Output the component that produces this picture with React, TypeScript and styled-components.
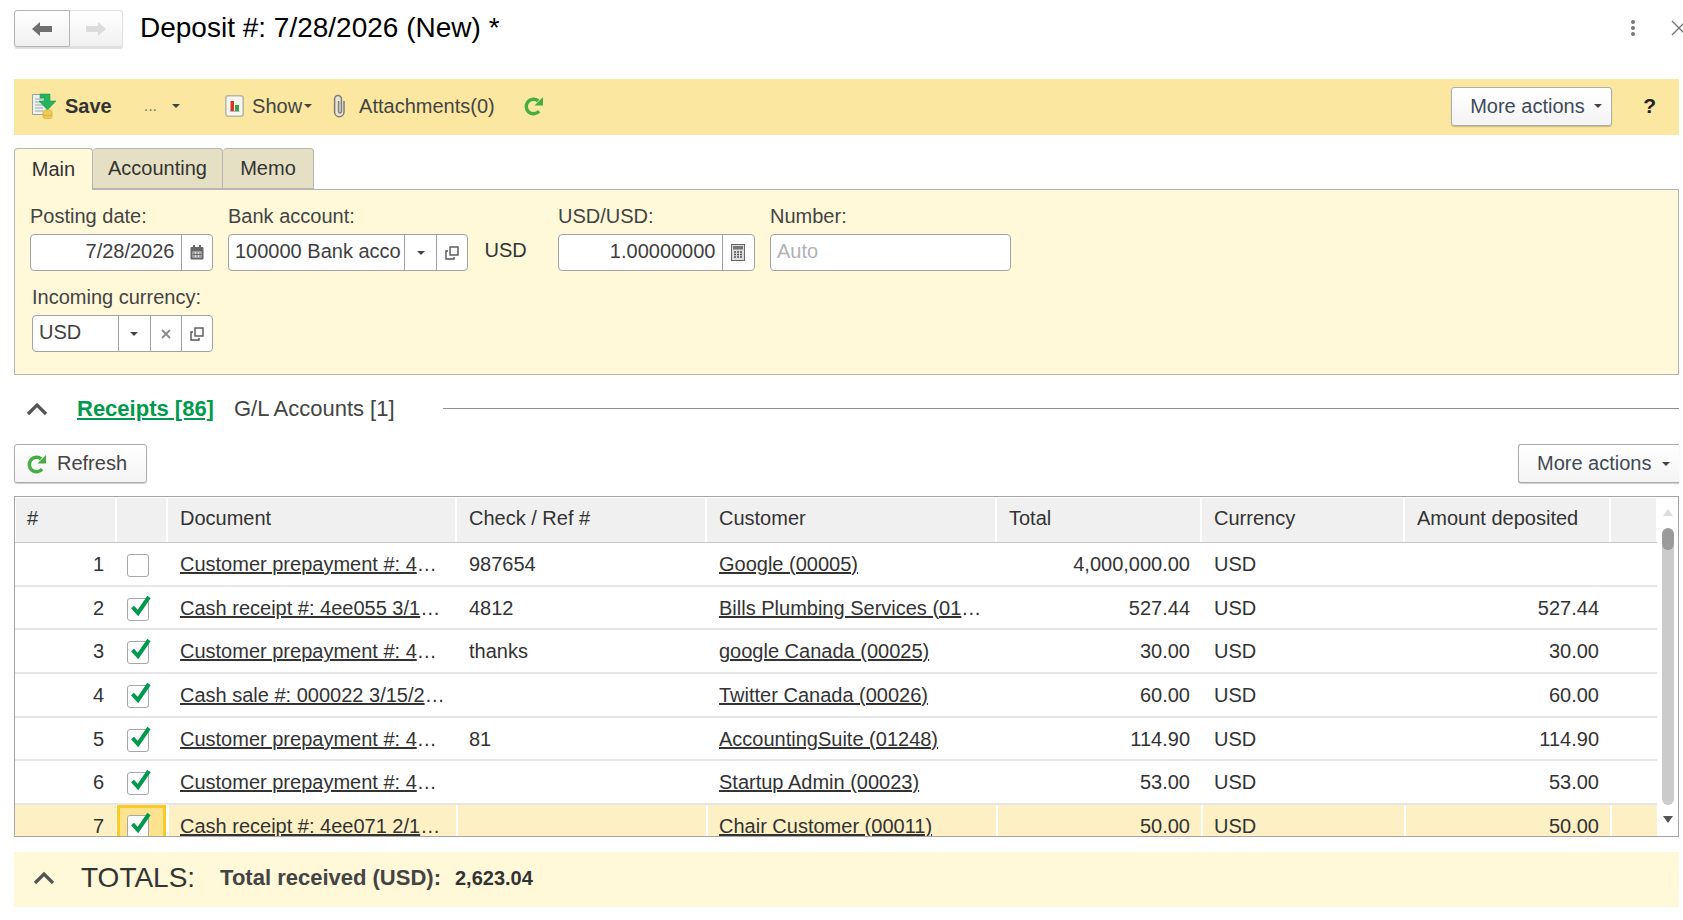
import React from "react";
import styled, { createGlobalStyle } from "styled-components";

const Global = createGlobalStyle`
  html, body { margin: 0; padding: 0; background: #fff; }
  body { font-family: "Liberation Sans", Arial, sans-serif; font-size: 20px; color: #333; overflow: hidden; }
  * { box-sizing: border-box; }
`;

const Page = styled.div`
  width: 1683px; height: 920px; overflow: hidden; padding-left: 14px; padding-right: 4px;
`;
const Header = styled.header`
  height: 79px; display: flex; align-items: flex-start; padding-top: 10px; position: relative;
`;
const NavGroup = styled.div`
  display: flex; width: 109px; height: 37px; border-radius: 3px; flex: none;
  box-shadow: 0 2px 1px rgba(0,0,0,.13);
`;
const NavButton = styled.button<{ $active?: boolean }>`
  flex: ${p => (p.$active ? "0 0 56px" : "1")};
  display: flex; align-items: center; justify-content: center; padding: 0;
  background: linear-gradient(#fff, #f0f0f0);
  border: 1px solid ${p => (p.$active ? "#b4b4b4" : "#dedede")};
  border-left-width: ${p => (p.$active ? "1px" : "0")};
  border-radius: ${p => (p.$active ? "3px 0 0 3px" : "0 3px 3px 0")};
`;
const Title = styled.h1`
  margin: 1px 0 0 17px; font-weight: 400; font-size: 28px; line-height: 34px; color: #000;
`;
const HeaderTools = styled.div`
  position: absolute; top: 19px; right: -8px; display: flex; gap: 35px; align-items: center; width: 57px;
`;

const Toolbar = styled.div`
  height: 56px; background: #fbe79f; display: flex; align-items: center; position: relative; padding-bottom: 2px;
`;
const ToolItem = styled.span<{ $ml?: number; $bold?: boolean; $faint?: boolean }>`
  display: inline-flex; align-items: center; margin-left: ${p => p.$ml ?? 0}px;
  font-weight: ${p => (p.$bold ? 700 : 400)}; color: ${p => (p.$faint ? "#777" : p.$bold ? "#333" : "#444")};
  font-size: ${p => (p.$faint ? 16 : 20)}px;
  white-space: nowrap;
`;
const ActionButton = styled.button<{ $width: number; $clipRight?: boolean }>`
  width: ${p => p.$width}px; height: 39px; padding: 0 9px 0 18px; display: flex; align-items: center; justify-content: space-between;
  font: inherit; color: #3f4a58; background: linear-gradient(#fff, #f4f4f4);
  border: 1px solid #adadad; border-radius: ${p => (p.$clipRight ? "3px 0 0 3px" : "3px")};
  border-right-width: ${p => (p.$clipRight ? 0 : 1)}px;
  box-shadow: 0 1px 1px rgba(0,0,0,.2);
`;
const ToolbarEnd = styled.div`
  margin-left: auto; display: flex; align-items: center;
`;
const Help = styled.span`
  font-weight: 700; font-size: 21px; color: #222; margin: 0 23px 0 31px;
`;

const Tabs = styled.div`
  display: flex; margin-top: 13px; height: 41px; position: relative; z-index: 1;
`;
const Tab = styled.div<{ $active?: boolean; $width: number }>`
  width: ${p => p.$width}px; height: ${p => (p.$active ? 42 : 41)}px;
  display: flex; align-items: center; justify-content: center; padding-top: 0;
  background: ${p => (p.$active ? "#fff8d9" : "#e5e0c4")};
  border: 1px solid #b5b5b5; border-bottom: ${p => (p.$active ? "none" : "1px solid #b5b5b5")};
  border-left-width: ${p => (p.$active ? "1px" : "0")};
  border-radius: 4px 4px 0 0; color: #333;
`;
const Panel = styled.section`
  height: 186px; background: #fff8d9; border: 1px solid #b5b5b5; padding: 14px 0 0 15px;
  display: flex; flex-direction: column; gap: 14px;
`;
const FieldRow = styled.div<{ $indent?: number }>`
  display: flex; gap: 15.5px; margin-left: ${p => p.$indent ?? 0}px;
`;
const Field = styled.div<{ $width: number }>`
  width: ${p => p.$width}px; display: flex; flex-direction: column; gap: 6px;
`;
const Label = styled.label`
  height: 24px; line-height: 24px; color: #444; white-space: nowrap;
`;
const InputBox = styled.div`
  height: 37px; display: flex; background: #fff; border: 1px solid #a3a3a3; border-radius: 4px; overflow: hidden;
`;
const InputText = styled.span<{ $right?: boolean; $muted?: boolean }>`
  flex: 1; min-width: 0; line-height: 33px; padding: 0 ${p => (p.$right ? 6 : 0)}px 0 ${p => (p.$right ? 0 : 6)}px; overflow: hidden; white-space: nowrap;
  text-align: ${p => (p.$right ? "right" : "left")}; color: ${p => (p.$muted ? "#b2b2b2" : "#404040")};
`;
const InputAddon = styled.span<{ $width: number }>`
  flex: 0 0 ${p => p.$width}px; border-left: 1px solid #a3a3a3; display: flex; align-items: center; justify-content: center;
`;
const SuffixText = styled.span`
  align-self: flex-end; height: 37px; line-height: 33px; width: 58px; margin-left: 1px; color: #333;
`;

const SectionHead = styled.div`
  height: 69px; display: flex; align-items: center; padding-bottom: 2px;
`;
const Chevron = styled.span<{ $ml: number; $mr: number }>`
  display: inline-flex; margin: 0 ${p => p.$mr}px 0 ${p => p.$ml}px;
`;
const SectionLink = styled.a`
  font-weight: 700; font-size: 22px; color: #009a4e; text-decoration: underline; white-space: nowrap;
`;
const SectionTab = styled.span`
  margin-left: 20px; font-size: 22px; color: #444; white-space: nowrap;
`;
const SectionLine = styled.span`
  flex: 1; height: 1px; background: #8f8f8f; margin-left: 48px;
`;

const GridBar = styled.div`
  height: 39px; display: flex; justify-content: space-between;
`;
const RefreshButton = styled.button`
  width: 133px; height: 39px; display: flex; align-items: center; gap: 10px; padding: 0 0 0 12px;
  font: inherit; color: #444; background: linear-gradient(#fff, #f4f4f4);
  border: 1px solid #adadad; border-radius: 3px; box-shadow: 0 1px 1px rgba(0,0,0,.2);
`;

const COLS = "101px 51px 289px 250px 290px 205px 203px 206px 47px";
const GridFrame = styled.div`
  margin-top: 13px; height: 341px; border: 1px solid #a6a6a6; display: flex; overflow: hidden;
`;
const GridMain = styled.div`
  flex: 1; min-width: 0;
`;
const HeadRow = styled.div`
  display: grid; grid-template-columns: ${COLS}; height: 46px; border-bottom: 1px solid #c6c6c6; padding-top: 1px;
`;
const HeadCell = styled.div`
  background: #f0f0f0; margin: 0 1px; padding-left: 12px; line-height: 41px; color: #333; white-space: nowrap;
  &:first-child { margin-left: 1px; padding-left: 11px; }
`;
const Row = styled.div<{ $selected?: boolean }>`
  display: grid; grid-template-columns: ${COLS}; height: 43.67px;
  background: ${p => (p.$selected ? "transparent" : "#fff")};
  border-bottom: 2px solid ${p => (p.$selected ? "transparent" : "#e6e6ea")};
`;
const Cell = styled.div<{ $right?: boolean; $sel?: boolean }>`
  padding: 0 11px 0 13px; line-height: 42px; overflow: hidden; white-space: nowrap;
  text-align: ${p => (p.$right ? "right" : "left")}; color: #333;
  background: ${p => (p.$sel ? "#fdf0c4" : "transparent")};
  box-shadow: ${p => (p.$sel ? "inset 2px 0 #fff" : "none")};
  &:first-child { box-shadow: none; padding-right: 12px; }
`;
const CellLink = styled.a`
  color: #333; text-decoration: underline;
`;
const CheckCell = styled.div<{ $focus?: boolean }>`
  display: flex; align-items: flex-start; justify-content: center; padding-top: 11px; position: relative;
  height: 44px; margin: 0 1px;
  background: ${p => (p.$focus ? "#fde28f" : "transparent")};
  border: ${p => (p.$focus ? "3px solid #fbcb22" : "none")};
  border-bottom: none;
  ${p => (p.$focus ? "padding-top: 7px;" : "")}
`;
const CheckBox = styled.span`
  width: 22px; height: 23px; background: #fff; border: 1px solid #a8a8a8; border-radius: 3px; position: relative; display: block; margin-right: 8px;
`;
const CheckMark = styled.svg`
  position: absolute; left: 1px; top: -4px;
`;
const Scrollbar = styled.div`
  width: 21px; flex: none; display: flex; flex-direction: column; align-items: center; padding: 12px 0 0 1px;
`;
const Track = styled.div`
  width: 12px; height: 277px; margin-top: 12px; border-radius: 6px; background: #cbcbcb; overflow: hidden; flex: none;
`;
const Thumb = styled.div`
  height: 22px; border-radius: 6px; background: #9b9b9b;
`;
const Arrow = styled.span<{ $down?: boolean; $color: string }>`
  width: 0; height: 0; flex: none; border-left: 5px solid transparent; border-right: 5px solid transparent;
  ${p => (p.$down ? `border-top: 7px solid ${p.$color}; margin-top: 11px;` : `border-bottom: 7px solid ${p.$color};`)}
`;

const Totals = styled.footer`
  margin-top: 15px; height: 55px; background: #fff8d9; display: flex; align-items: center; padding-bottom: 3px;
`;
const TotalsTitle = styled.span`
  font-size: 28px; color: #333; margin-right: 25px;
`;
const TotalsLabel = styled.span`
  font-weight: 700; font-size: 22px; color: #444; margin-right: 14px;
`;
const TotalsValue = styled.span`
  font-weight: 700; color: #333; font-size: 20px;
`;
const Caret = styled.span<{ $ml?: number; $size?: number }>`
  display: inline-block; width: 0; height: 0; margin-left: ${p => p.$ml ?? 0}px;
  border-left: ${p => p.$size ?? 4}px solid transparent; border-right: ${p => p.$size ?? 4}px solid transparent;
  border-top: ${p => p.$size ?? 4}px solid #444;
`;

const ArrowIcon = ({ dir, color }: { dir: "l" | "r"; color: string }) => (
  <svg width="22" height="18" viewBox="0 0 22 18">
    <path d={dir === "l" ? "M1 9 9 2v4h12v6H9v4z" : "M21 9 13 2v4H1v6h12v4z"} fill={color} />
  </svg>
);
const ChevronUp = ({ w = 22 }: { w?: number }) => (
  <svg width={w} height="14" viewBox="0 0 22 14">
    <path d="M2 12 11 3l9 9" fill="none" stroke="#555" strokeWidth="3.2" />
  </svg>
);
const RefreshIcon = () => (
  <svg width="20" height="20" viewBox="0 0 20 20">
    <path d="M15.100 15.200A7.300 7.300 0 1 1 14.200 4.900" fill="none" stroke="#45ad44" strokeWidth="3.400" />
    <path d="M19 1v8.500h-8.500z" fill="#45ad44" />
  </svg>
);
const SaveIcon = () => (
  <svg width="24" height="26" viewBox="0 0 24 26">
    <path d="M.5 1.500h15v20H.5z" fill="#eef1ee" stroke="#9aa39a" />
    <path d="M3 6h8M3 9h8M3 12h8M3 15h8M3 18h8" stroke="#9aa6ad" strokeWidth="1.200" />
    <path d="M8 1h10v7h6l-8.500 9L7 8h5V5H8z" fill="#27b35b" stroke="#1a9a4c" strokeWidth=".6" />
    <path d="M11 19c0-1.300 2-2.200 4.500-2.200s4.500.9 4.500 2.200v5c0 1.200-2 2-4.500 2S11 25.200 11 24z" fill="#efcb55" stroke="#c9a735" strokeWidth=".6" />
    <path d="M11 21.500c1 1 3 1.400 4.500 1.400s3.500-.4 4.500-1.400" fill="none" stroke="#c9a735" strokeWidth=".7" />
  </svg>
);
const ShowIcon = () => (
  <svg width="19" height="22" viewBox="0 0 19 22">
    <rect x=".8" y=".8" width="17.400" height="20.400" rx="2.500" fill="#f8f7ef" stroke="#b9b8a8" strokeWidth="1.600" />
    <path d="M5 16.500h9.500" stroke="#b5b5b5" strokeWidth="1" />
    <rect x="5.500" y="6" width="3.500" height="10" fill="#d9352b" />
    <rect x="10" y="10" width="4" height="6" fill="#3da244" />
  </svg>
);
const ClipIcon = () => (
  <svg width="13" height="24" viewBox="0 0 13 24">
    <path d="M11 7v11a4.700 4.700 0 0 1-9.400 0V5a3.400 3.400 0 0 1 6.800 0v12.500a1.400 1.400 0 0 1-2.800 0V7" fill="#e9e6d6" stroke="#7c7c7c" strokeWidth="1.500" />
  </svg>
);
const CalendarIcon = () => (
  <svg width="14" height="15" viewBox="0 0 14 15">
    <rect x=".5" y="2" width="13" height="12.500" rx="1" fill="#666" />
    <rect x="3" y="0" width="2" height="3.500" fill="#666" />
    <rect x="9" y="0" width="2" height="3.500" fill="#666" />
    <path d="M2.500 6.500h9v6h-9z" fill="#ddd" />
    <path d="M4 7v5M7 7v5M10 7v5M2.500 9.500h9" stroke="#666" strokeWidth="1" />
  </svg>
);
const CalculatorIcon = () => (
  <svg width="14" height="17" viewBox="0 0 14 17">
    <rect x=".5" y=".5" width="13" height="16" fill="#ddd" stroke="#666" />
    <rect x="2" y="2" width="10" height="3.500" fill="#777" />
    <path d="M3 8h2M6 8h2M9 8h2M3 10.500h2M6 10.500h2M9 10.500h2M3 13h2M6 13h2M9 13h2" stroke="#555" strokeWidth="1.400" />
  </svg>
);
const CopyIcon = () => (
  <svg width="14" height="14" viewBox="0 0 14 14">
    <rect x="5" y="1" width="8" height="8" fill="none" stroke="#555" strokeWidth="1.400" />
    <path d="M3 5H1v8h8v-2" fill="none" stroke="#555" strokeWidth="1.400" />
  </svg>
);
const CrossIcon = () => (
  <svg width="10" height="10" viewBox="0 0 10 10">
    <path d="M1 1l8 8M9 1 1 9" stroke="#8a8a8a" strokeWidth="1.800" />
  </svg>
);

type Rec = { n: number; checked: boolean; doc: string; ref: string; customer: string; cut?: boolean; total: string; amount: string };
const RECS: Rec[] = [
  { n: 1, checked: false, doc: "Customer prepayment #: 4", ref: "987654", customer: "Google (00005)", total: "4,000,000.00", amount: "" },
  { n: 2, checked: true, doc: "Cash receipt #: 4ee055 3/1", ref: "4812", customer: "Bills Plumbing Services (01", cut: true, total: "527.44", amount: "527.44" },
  { n: 3, checked: true, doc: "Customer prepayment #: 4", ref: "thanks", customer: "google Canada (00025)", total: "30.00", amount: "30.00" },
  { n: 4, checked: true, doc: "Cash sale #: 000022 3/15/2", ref: "", customer: "Twitter Canada (00026)", total: "60.00", amount: "60.00" },
  { n: 5, checked: true, doc: "Customer prepayment #: 4", ref: "81", customer: "AccountingSuite (01248)", total: "114.90", amount: "114.90" },
  { n: 6, checked: true, doc: "Customer prepayment #: 4", ref: "", customer: "Startup Admin (00023)", total: "53.00", amount: "53.00" },
  { n: 7, checked: true, doc: "Cash receipt #: 4ee071 2/1", ref: "", customer: "Chair Customer (00011)", total: "50.00", amount: "50.00" },
];
const HEADS = ["#", "", "Document", "Check / Ref #", "Customer", "Total", "Currency", "Amount deposited", ""];

export default function App() {
  return (
    <Page>
      <Global />
      <Header>
        <NavGroup>
          <NavButton $active><ArrowIcon dir="l" color="#6f6f6f" /></NavButton>
          <NavButton><ArrowIcon dir="r" color="#dcdcdc" /></NavButton>
        </NavGroup>
        <Title>Deposit #: 7/28/2026 (New) *</Title>
        <HeaderTools>
          <svg width="6" height="18" viewBox="0 0 6 18">
            <circle cx="3" cy="3" r="2" fill="#777" /><circle cx="3" cy="9" r="2" fill="#777" /><circle cx="3" cy="15" r="2" fill="#777" />
          </svg>
          <svg width="16" height="16" viewBox="0 0 16 16" style={{ flex: "none" }}>
            <path d="M1 1l14 14M15 1 1 15" stroke="#777" strokeWidth="1.300" />
          </svg>
        </HeaderTools>
      </Header>

      <Toolbar>
        <ToolItem $ml={18}><SaveIcon /></ToolItem>
        <ToolItem $ml={9} $bold>Save</ToolItem>
        <ToolItem $ml={32} $faint>...</ToolItem>
        <ToolItem $ml={15}><Caret /></ToolItem>
        <ToolItem $ml={45}><ShowIcon /></ToolItem>
        <ToolItem $ml={8}>Show<Caret $ml={2} /></ToolItem>
        <ToolItem $ml={21}><ClipIcon /></ToolItem>
        <ToolItem $ml={13}>Attachments(0)</ToolItem>
        <ToolItem $ml={29}><RefreshIcon /></ToolItem>
        <ToolbarEnd>
          <ActionButton $width={161}>More actions <Caret /></ActionButton>
          <Help>?</Help>
        </ToolbarEnd>
      </Toolbar>

      <Tabs>
        <Tab $active $width={79}>Main</Tab>
        <Tab $width={130}>Accounting</Tab>
        <Tab $width={91}>Memo</Tab>
      </Tabs>
      <Panel>
        <FieldRow>
          <Field $width={182.500}>
            <Label>Posting date:</Label>
            <InputBox>
              <InputText $right>7/28/2026</InputText>
              <InputAddon $width={31}><CalendarIcon /></InputAddon>
            </InputBox>
          </Field>
          <Field $width={240}>
            <Label>Bank account:</Label>
            <InputBox>
              <InputText>100000 Bank acco</InputText>
              <InputAddon $width={32}><Caret /></InputAddon>
              <InputAddon $width={31}><CopyIcon /></InputAddon>
            </InputBox>
          </Field>
          <SuffixText>USD</SuffixText>
          <Field $width={196.500}>
            <Label>USD/USD:</Label>
            <InputBox>
              <InputText $right>1.00000000</InputText>
              <InputAddon $width={32}><CalculatorIcon /></InputAddon>
            </InputBox>
          </Field>
          <Field $width={241}>
            <Label>Number:</Label>
            <InputBox>
              <InputText $muted>Auto</InputText>
            </InputBox>
          </Field>
        </FieldRow>
        <FieldRow $indent={2}>
          <Field $width={180.500}>
            <Label>Incoming currency:</Label>
            <InputBox>
              <InputText>USD</InputText>
              <InputAddon $width={32}><Caret /></InputAddon>
              <InputAddon $width={31}><CrossIcon /></InputAddon>
              <InputAddon $width={31}><CopyIcon /></InputAddon>
            </InputBox>
          </Field>
        </FieldRow>
      </Panel>

      <SectionHead>
        <Chevron $ml={12} $mr={29}><ChevronUp /></Chevron>
        <SectionLink>Receipts [86]</SectionLink>
        <SectionTab>G/L Accounts [1]</SectionTab>
        <SectionLine />
      </SectionHead>
      <GridBar>
        <RefreshButton><RefreshIcon />Refresh</RefreshButton>
        <ActionButton $width={161} $clipRight>More actions <Caret /></ActionButton>
      </GridBar>

      <GridFrame>
        <GridMain>
          <HeadRow>
            {HEADS.map((h, i) => <HeadCell key={i}>{h}</HeadCell>)}
          </HeadRow>
          {RECS.map(r => {
            const sel = r.n === 7;
            return (
              <Row key={r.n} $selected={sel}>
                <Cell $right $sel={sel}>{r.n}</Cell>
                <CheckCell $focus={sel}>
                  <CheckBox>
                    {r.checked && (
                      <CheckMark width="24" height="24" viewBox="0 0 24 24">
                        <path d="M3.500 12 9 18 20 2" fill="none" stroke="#009a4e" strokeWidth="4" />
                      </CheckMark>
                    )}
                  </CheckBox>
                </CheckCell>
                <Cell $sel={sel}><CellLink>{r.doc}</CellLink>…</Cell>
                <Cell $sel={sel}>{r.ref}</Cell>
                <Cell $sel={sel}><CellLink>{r.customer}</CellLink>{r.cut ? "…" : ""}</Cell>
                <Cell $right $sel={sel}>{r.total}</Cell>
                <Cell $sel={sel}>USD</Cell>
                <Cell $right $sel={sel}>{r.amount}</Cell>
                <Cell $sel={sel} />
              </Row>
            );
          })}
        </GridMain>
        <Scrollbar>
          <Arrow $color="#ddd" />
          <Track><Thumb /></Track>
          <Arrow $down $color="#555" />
        </Scrollbar>
      </GridFrame>

      <Totals>
        <Chevron $ml={19} $mr={26}><ChevronUp /></Chevron>
        <TotalsTitle>TOTALS:</TotalsTitle>
        <TotalsLabel>Total received (USD):</TotalsLabel>
        <TotalsValue>2,623.04</TotalsValue>
      </Totals>
    </Page>
  );
}
